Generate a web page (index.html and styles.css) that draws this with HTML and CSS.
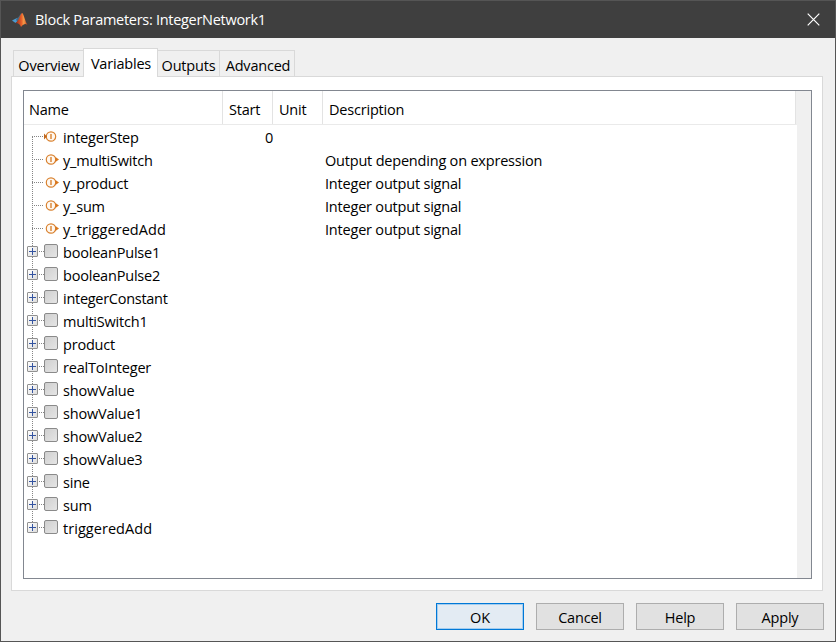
FILE: index.html
```html
<!DOCTYPE html>
<html lang="en">
<head>
<meta charset="utf-8">
<title>Block Parameters: IntegerNetwork1</title>
<link rel="stylesheet" href="styles.css">
</head>
<body>
<svg width="0" height="0" class="defs">
  <defs>
    <linearGradient id="flame" x1="0" y1="0" x2="1" y2="0"><stop offset="0" stop-color="#8c2a1c"/><stop offset=".5" stop-color="#e8602a"/><stop offset=".7" stop-color="#f4a04a"/><stop offset="1" stop-color="#b8301c"/></linearGradient>
    <symbol id="port-out" viewBox="0 0 16 14"><circle cx="7" cy="6.5" r="4.7" fill="#fff8f0" stroke="#d9812e" stroke-width="1.2"/><path d="M7 4v5" stroke="#d9812e" stroke-width="1.4"/><path d="M11.500 4 15 6.500l-3.500 2.500z" fill="#d9771c"/></symbol>
    <symbol id="port-in" viewBox="0 0 16 14"><circle cx="7" cy="6.500" r="4.700" fill="#fff8f0" stroke="#d9812e" stroke-width="1.200"/><path d="M7 4v5" stroke="#d9812e" stroke-width="1.400"/><path d="M0 3.500 3 6.500 0 9.500z" fill="#c0671c"/></symbol>
  </defs>
</svg>
<div class="window">
  <header class="titlebar">
    <svg class="logo" width="16" height="16" viewBox="0 0 16 16"><path d="M0 8.500 5 6l2 2-3.500 3z" fill="#4a9bd0"/><path d="M5 6c2-.5 3-4 4.500-5L8 8l-2 2-2-2z" fill="#426a86"/><path d="M3.500 11C7 9 8 2 10 1c1.500 0 3 8 5.500 12-2-1.500-3.500-1.500-6.500 2-1-2.500-2.500-4-5.500-4z" fill="url(#flame)"/></svg>
    <h1>Block Parameters: IntegerNetwork1</h1>
    <svg class="close" width="13" height="13" viewBox="0 0 13 13"><path d="M.7.7l11.600 11.600M12.300.7.7 12.300" stroke="#fff" stroke-width="1.200"/></svg>
  </header>
  <main>
    <nav class="tabs">
      <div class="tab overview">Overview</div>
      <div class="tab active">Variables</div>
      <div class="tab outputs">Outputs</div>
      <div class="tab advanced">Advanced</div>
    </nav>
    <section class="pane">
      <div class="tree">
        <div class="content">
          <div class="head"><span>Name</span><span>Start</span><span>Unit</span><span>Description</span></div>
          <div class="rows">
            <div class="row leaf"><i class="branch"></i><svg class="port"><use href="#port-in"/></svg><span class="name">integerStep</span><span class="start">0</span></div>
            <div class="row leaf"><i class="branch"></i><svg class="port"><use href="#port-out"/></svg><span class="name">y_multiSwitch</span><span class="desc">Output depending on expression</span></div>
            <div class="row leaf"><i class="branch"></i><svg class="port"><use href="#port-out"/></svg><span class="name">y_product</span><span class="desc">Integer output signal</span></div>
            <div class="row leaf"><i class="branch"></i><svg class="port"><use href="#port-out"/></svg><span class="name">y_sum</span><span class="desc">Integer output signal</span></div>
            <div class="row leaf"><i class="branch"></i><svg class="port"><use href="#port-out"/></svg><span class="name loose">y_triggeredAdd</span><span class="desc">Integer output signal</span></div>
            <div class="row"><i class="plus"></i><i class="link"></i><i class="box"></i><span class="name">booleanPulse1</span></div>
            <div class="row"><i class="plus"></i><i class="link"></i><i class="box"></i><span class="name">booleanPulse2</span></div>
            <div class="row"><i class="plus"></i><i class="link"></i><i class="box"></i><span class="name tight">integerConstant</span></div>
            <div class="row"><i class="plus"></i><i class="link"></i><i class="box"></i><span class="name">multiSwitch1</span></div>
            <div class="row"><i class="plus"></i><i class="link"></i><i class="box"></i><span class="name">product</span></div>
            <div class="row"><i class="plus"></i><i class="link"></i><i class="box"></i><span class="name">realToInteger</span></div>
            <div class="row"><i class="plus"></i><i class="link"></i><i class="box"></i><span class="name">showValue</span></div>
            <div class="row"><i class="plus"></i><i class="link"></i><i class="box"></i><span class="name">showValue1</span></div>
            <div class="row"><i class="plus"></i><i class="link"></i><i class="box"></i><span class="name">showValue2</span></div>
            <div class="row"><i class="plus"></i><i class="link"></i><i class="box"></i><span class="name">showValue3</span></div>
            <div class="row"><i class="plus"></i><i class="link"></i><i class="box"></i><span class="name">sine</span></div>
            <div class="row"><i class="plus"></i><i class="link"></i><i class="box"></i><span class="name">sum</span></div>
            <div class="row"><i class="plus"></i><i class="link"></i><i class="box"></i><span class="name loose">triggeredAdd</span></div>
          </div>
        </div>
        <div class="gutter"></div>
      </div>
    </section>
  </main>
  <footer>
    <button class="default">OK</button>
    <button>Cancel</button>
    <button>Help</button>
    <button>Apply</button>
  </footer>
</div>
</body>
</html>
```
FILE: styles.css
```css
* { box-sizing: border-box; }
body {
  margin: 0;
  font: 14.5px/20px "Open Sans", "Noto Sans", sans-serif;
  letter-spacing: -0.2px;
  color: #000;
}
.defs { display: block; }
.window {
  width: 836px;
  height: 642px;
  display: flex;
  flex-direction: column;
  background: #f0f0f0;
  border: 1px solid #555;
}
.titlebar {
  height: 37px;
  flex: none;
  display: flex;
  align-items: center;
  padding: 0 15px 0 11px;
  background: #3f3f3f;
}
.logo { margin-right: 7px; }
.titlebar h1 {
  margin: 0;
  flex: 1;
  font-size: 14.5px;
  font-weight: 400;
  letter-spacing: -0.29px;
  color: #fff;
}
main { padding: 11px 12px 0 10px; }
.tabs {
  display: flex;
  align-items: flex-end;
  height: 27px;
  padding-left: 2px;
}
.tab {
  height: 26px;
  padding-top: 5px;
  text-align: center;
  white-space: nowrap;
  border: 1px solid #d9d9d9;
  border-left: 0;
  border-bottom: 0;
}
.overview { width: 70px; border-left: 1px solid #d9d9d9; border-right: 0; padding-left: 1px; }
.active {
  width: 75px;
  height: 29px;
  background: #fff;
  border-left: 1px solid #d9d9d9;
  margin-bottom: -1px;
  padding-left: 1px;
  z-index: 1;
}
.outputs { width: 62px; }
.advanced { width: 75px; padding-left: 2px; }
.pane {
  height: 515px;
  padding: 13px 10px 11px 11px;
  background: #fff;
  border: 1px solid #d9d9d9;
}
.tree {
  height: 489px;
  display: flex;
  border: 1px solid #828790;
}
.content { flex: 1; }
.gutter { width: 14px; background: #f0f0f0; }
.head {
  height: 34px;
  display: grid;
  grid-template-columns: 199px 50px 50px 1fr;
  grid-template-rows: 33px;
  line-height: 38px;
  border-bottom: 1px solid #eaeaea;
  border-right: 1px solid #f0f0f0;
}
.head span { padding-left: 6px; border-right: 1px solid #e3e3e3; }
.head span:first-child { padding-left: 5px; }
.rows {
  margin-top: 1px;
  background: repeating-linear-gradient(#858585 0 1px, transparent 1px 2px) 8px 11px / 1px 391px no-repeat;
}
.row { display: flex; height: 23px; padding-left: 3px; white-space: nowrap; }
.name { width: 178px; line-height: 24px; }
.loose { letter-spacing: 0.05px; }
.tight { letter-spacing: -0.28px; }
.start { width: 32px; text-align: right; line-height: 24px; }
.desc { margin-left: 84px; line-height: 24px; }
.branch {
  width: 11px;
  height: 1px;
  margin: 10px 1px 0 5px;
  background: repeating-linear-gradient(90deg, #858585 0 1px, transparent 1px 2px);
}
.port { width: 16px; height: 14px; margin: 4px 3px 0 0; overflow: visible; }
.plus {
  width: 11px;
  height: 11px;
  margin-top: 5px;
  border: 1px solid #919191;
  border-radius: 1px;
  background:
    linear-gradient(#3454a0, #3454a0) 1px 4px / 7px 1px no-repeat,
    linear-gradient(#3454a0, #3454a0) 4px 1px / 1px 7px no-repeat,
    linear-gradient(135deg, #fff, #dcdcdc);
}
.link {
  width: 5px;
  height: 1px;
  margin: 10px 1px 0 1px;
  background: repeating-linear-gradient(90deg, #858585 0 1px, transparent 1px 2px);
}
.box {
  width: 14px;
  height: 14px;
  margin: 3px 5px 0 -1px;
  border: 1px solid #8a8a8a;
  border-radius: 2px;
  background: linear-gradient(135deg, #d0d0d0, #e5e5e5);
}
footer {
  display: flex;
  justify-content: flex-end;
  gap: 12px;
  padding: 12px 11px 0 0;
}
button {
  width: 88px;
  height: 27px;
  padding: 3px 0 0;
  font: inherit;
  letter-spacing: inherit;
  color: #000;
  background: #e1e1e1;
  border: 1px solid #adadad;
}
.default {
  background: #e3ebf3;
  border-color: #0078d7;
  box-shadow: inset 0 0 0 1px #a5cdee;
}
```
